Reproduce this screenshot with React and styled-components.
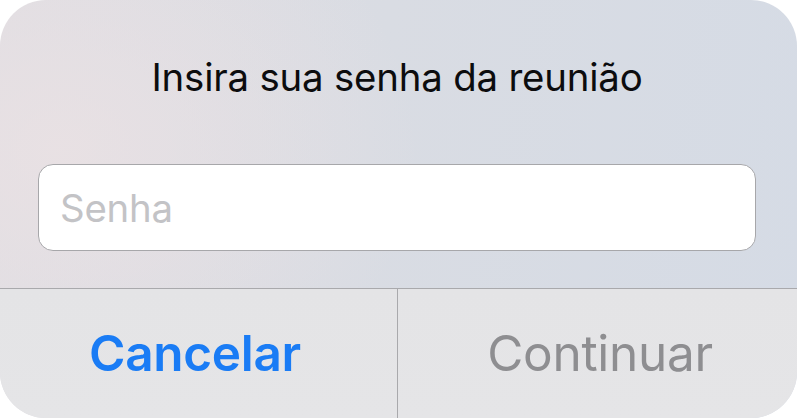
import React from "react";
import styled, { createGlobalStyle } from "styled-components";

const Global = createGlobalStyle`
  html, body { margin: 0; padding: 0; background: #ffffff; }
  body { font-family: Inter, "Noto Sans", sans-serif; -webkit-font-smoothing: antialiased; }
`;

const Dialog = styled.div`
  width: 797px;
  height: 418px;
  border-radius: 46px;
  overflow: hidden;
  display: flex;
  flex-direction: column;
  background:
    radial-gradient(ellipse 360px 300px at 60px 150px, rgba(236, 226, 228, 0.75), rgba(236, 226, 228, 0) 100%),
    linear-gradient(100deg, #dedde2 0%, #d9dce3 45%, #d5dbe5 100%);
`;

const Top = styled.div`
  display: flex;
  flex-direction: column;
  padding: 0 41px 0 38px;
  height: 288px;
  box-sizing: border-box;
`;

const Title = styled.h1`
  margin: 0;
  padding-top: 51px;
  height: 164px;
  box-sizing: border-box;
  text-align: center;
  font-family: Inter, "Noto Sans", sans-serif;
  font-weight: 400;
  font-size: 38.4px;
  line-height: 52px;
  color: #0c0c0e;
  letter-spacing: -0.2px;
`;

const Field = styled.div`
  height: 87px;
  box-sizing: border-box;
  background: #ffffff;
  border: 1px solid #a7a7aa;
  border-radius: 15px;
  display: flex;
  align-items: center;
  padding: 0 21px;
`;

const Placeholder = styled.span`
  font-family: Inter, "Noto Sans", sans-serif;
  font-size: 38.4px;
  color: #c3c3c6;
  letter-spacing: -0.2px;
`;

const Actions = styled.div`
  flex: 1;
  display: grid;
  grid-template-columns: 397px 1fr;
  border-top: 1px solid #a9a9ac;
  background: linear-gradient(180deg, #e4e4e6 0%, #e5e5e7 100%);
`;

const Action = styled.button`
  appearance: none;
  border: none;
  background: transparent;
  margin: 0;
  padding: ${(p) => (p.$divider ? "0 0 2px 5px" : "0 7px 2px 0")};
  display: flex;
  align-items: center;
  justify-content: center;
  font-family: Inter, "Noto Sans", sans-serif;
  font-size: 49.5px;
  letter-spacing: -0.3px;
  font-weight: ${(p) => (p.$primary ? 600 : 400)};
  color: ${(p) => (p.$disabled ? "#8e8e91" : "#1a7cf5")};
  border-left: ${(p) => (p.$divider ? "1px solid #a9a9ac" : "none")};
`;

export default function App() {
  return (
    <>
      <Global />
      <Dialog>
        <Top>
          <Title>Insira sua senha da reunião</Title>
          <Field>
            <Placeholder>Senha</Placeholder>
          </Field>
        </Top>
        <Actions>
          <Action $primary>Cancelar</Action>
          <Action $divider $disabled>Continuar</Action>
        </Actions>
      </Dialog>
    </>
  );
}
